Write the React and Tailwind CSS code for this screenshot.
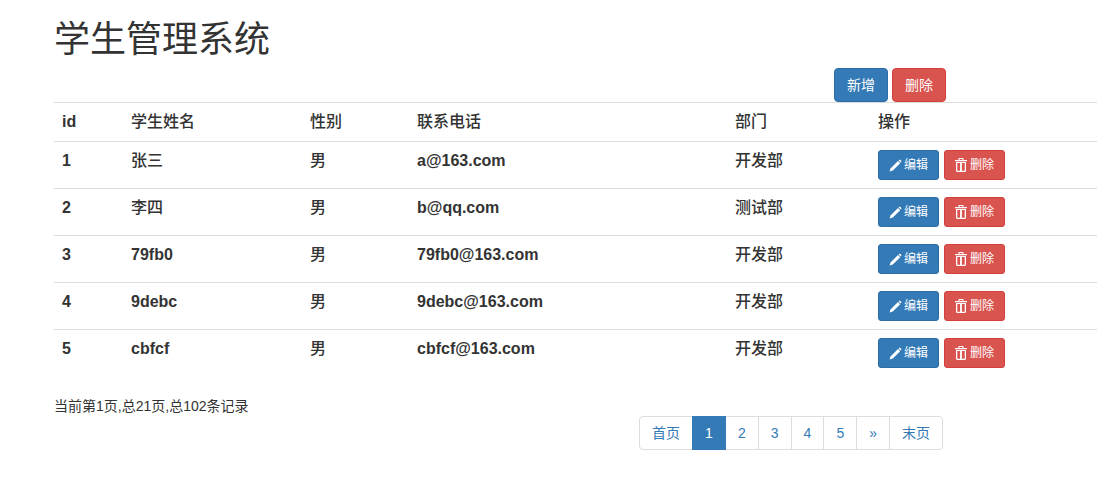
import React from 'react';

const students = [
  { id: 1, name: '张三', gender: '男', email: 'a@163.com', dept: '开发部' },
  { id: 2, name: '李四', gender: '男', email: 'b@qq.com', dept: '测试部' },
  { id: 3, name: '79fb0', gender: '男', email: '79fb0@163.com', dept: '开发部' },
  { id: 4, name: '9debc', gender: '男', email: '9debc@163.com', dept: '开发部' },
  { id: 5, name: 'cbfcf', gender: '男', email: 'cbfcf@163.com', dept: '开发部' },
];

const PencilIcon = () => (
  <svg viewBox="0 0 13 13" className="w-[13px] h-[13px] fill-white">
    <path d="M9 2l2.2 2.2-7.400 7.400L.6 12.400l.9-3z" />
    <path d="M10 1c.4-.4 1-.4 1.400 0l.7.7c.4.4.4 1 0 1.400l-.4.4-2.100-2.100.4-.4z" />
  </svg>
);

const TrashIcon = () => (
  <svg viewBox="0 0 12 14" className="w-3 h-[14px] fill-white">
    <path d="M4.200 0h3.600c.5 0 .8.3.8.8V2H12v1.200H0V2h3.400V.8c0-.5.3-.8.8-.8zm.3.9V2h3V.9h-3z" fillRule="evenodd" />
    <path d="M1 4h10v8.800c0 .7-.5 1.200-1.200 1.200H2.200C1.500 14 1 13.500 1 12.800V4zm1.300 1v7.800h2.800V5H2.300zm4.600 0v7.800h2.800V5H6.900z" fillRule="evenodd" />
  </svg>
);

// CJK text renders lighter than latin text in the bold cells
const weightOf = (text) => (/[\u4e00-\u9fff]/.test(text) ? 'font-medium' : 'font-bold');

const App = () => {
  return (
    <div className="w-[1097px] h-[493px] overflow-hidden bg-white pl-[54px] text-sm text-[#333] font-['Liberation_Sans','Noto_Sans_CJK_SC',sans-serif]">
      <h1 className="pt-[20px] h-[68px] text-[36px] leading-[40px] font-normal">学生管理系统</h1>

      {/* Top buttons */}
      <div className="flex gap-1 pl-[780px] h-[34px]">
        <button className="w-[54px] h-[34px] rounded bg-[#337ab7] border border-[#2e6da4] text-white">新增</button>
        <button className="w-[54px] h-[34px] rounded bg-[#d9534f] border border-[#d43f3a] text-white">删除</button>
      </div>

      {/* Table */}
      <table className="w-[1043px] table-fixed border-collapse text-base font-bold">
        <colgroup>
          <col className="w-[69px]" />
          <col className="w-[179px]" />
          <col className="w-[107px]" />
          <col className="w-[318px]" />
          <col className="w-[143px]" />
          <col />
        </colgroup>
        <thead>
          <tr className="h-[39px] border-t border-[#ddd]">
            <th className="px-2 text-left">id</th>
            <th className="px-2 text-left font-medium">学生姓名</th>
            <th className="px-2 text-left font-medium">性别</th>
            <th className="px-2 text-left font-medium">联系电话</th>
            <th className="px-2 text-left font-medium">部门</th>
            <th className="px-2 text-left font-medium">操作</th>
          </tr>
        </thead>
        <tbody>
          {students.map((s) => (
            <tr key={s.id} className="h-[47px] border-t border-[#ddd] align-top">
              <td className="px-2 pt-2 leading-[22px]">{s.id}</td>
              <td className={`px-2 pt-2 leading-[22px] ${weightOf(s.name)}`}>{s.name}</td>
              <td className={`px-2 pt-2 leading-[22px] ${weightOf(s.gender)}`}>{s.gender}</td>
              <td className="px-2 pt-2 leading-[22px]">{s.email}</td>
              <td className={`px-2 pt-2 leading-[22px] ${weightOf(s.dept)}`}>{s.dept}</td>
              <td className="px-2 pt-2">
                <div className="flex gap-[5px] font-normal">
                  <button className="flex items-center justify-center gap-[2px] w-[61px] h-[30px] rounded-[3px] bg-[#337ab7] border border-[#2e6da4] text-white text-xs">
                    <PencilIcon />
                    编辑
                  </button>
                  <button className="flex items-center justify-center gap-[3px] w-[61px] h-[30px] rounded-[3px] bg-[#d9534f] border border-[#d43f3a] text-white text-xs">
                    <TrashIcon />
                    删除
                  </button>
                </div>
              </td>
            </tr>
          ))}
        </tbody>
      </table>

      {/* Footer */}
      <div className="mt-[19px] leading-5 h-[20px]">当前第1页,总21页,总102条记录</div>
      <nav className="pl-[585px] flex text-[#337ab7] h-[34px]">
        <a className="flex items-center justify-center w-[54px] h-[34px] border border-[#ddd] rounded-l">首页</a>
        <a className="flex items-center justify-center w-[34px] h-[34px] border border-[#337ab7] bg-[#337ab7] text-white -ml-px relative">1</a>
        {['2', '3', '4', '5', '»'].map((p) => (
          <a key={p} className="flex items-center justify-center w-[33.8px] h-[34px] border border-[#ddd] -ml-px">{p}</a>
        ))}
        <a className="flex items-center justify-center w-[54px] h-[34px] border border-[#ddd] rounded-r -ml-px">末页</a>
      </nav>
    </div>
  );
};

export default App;
